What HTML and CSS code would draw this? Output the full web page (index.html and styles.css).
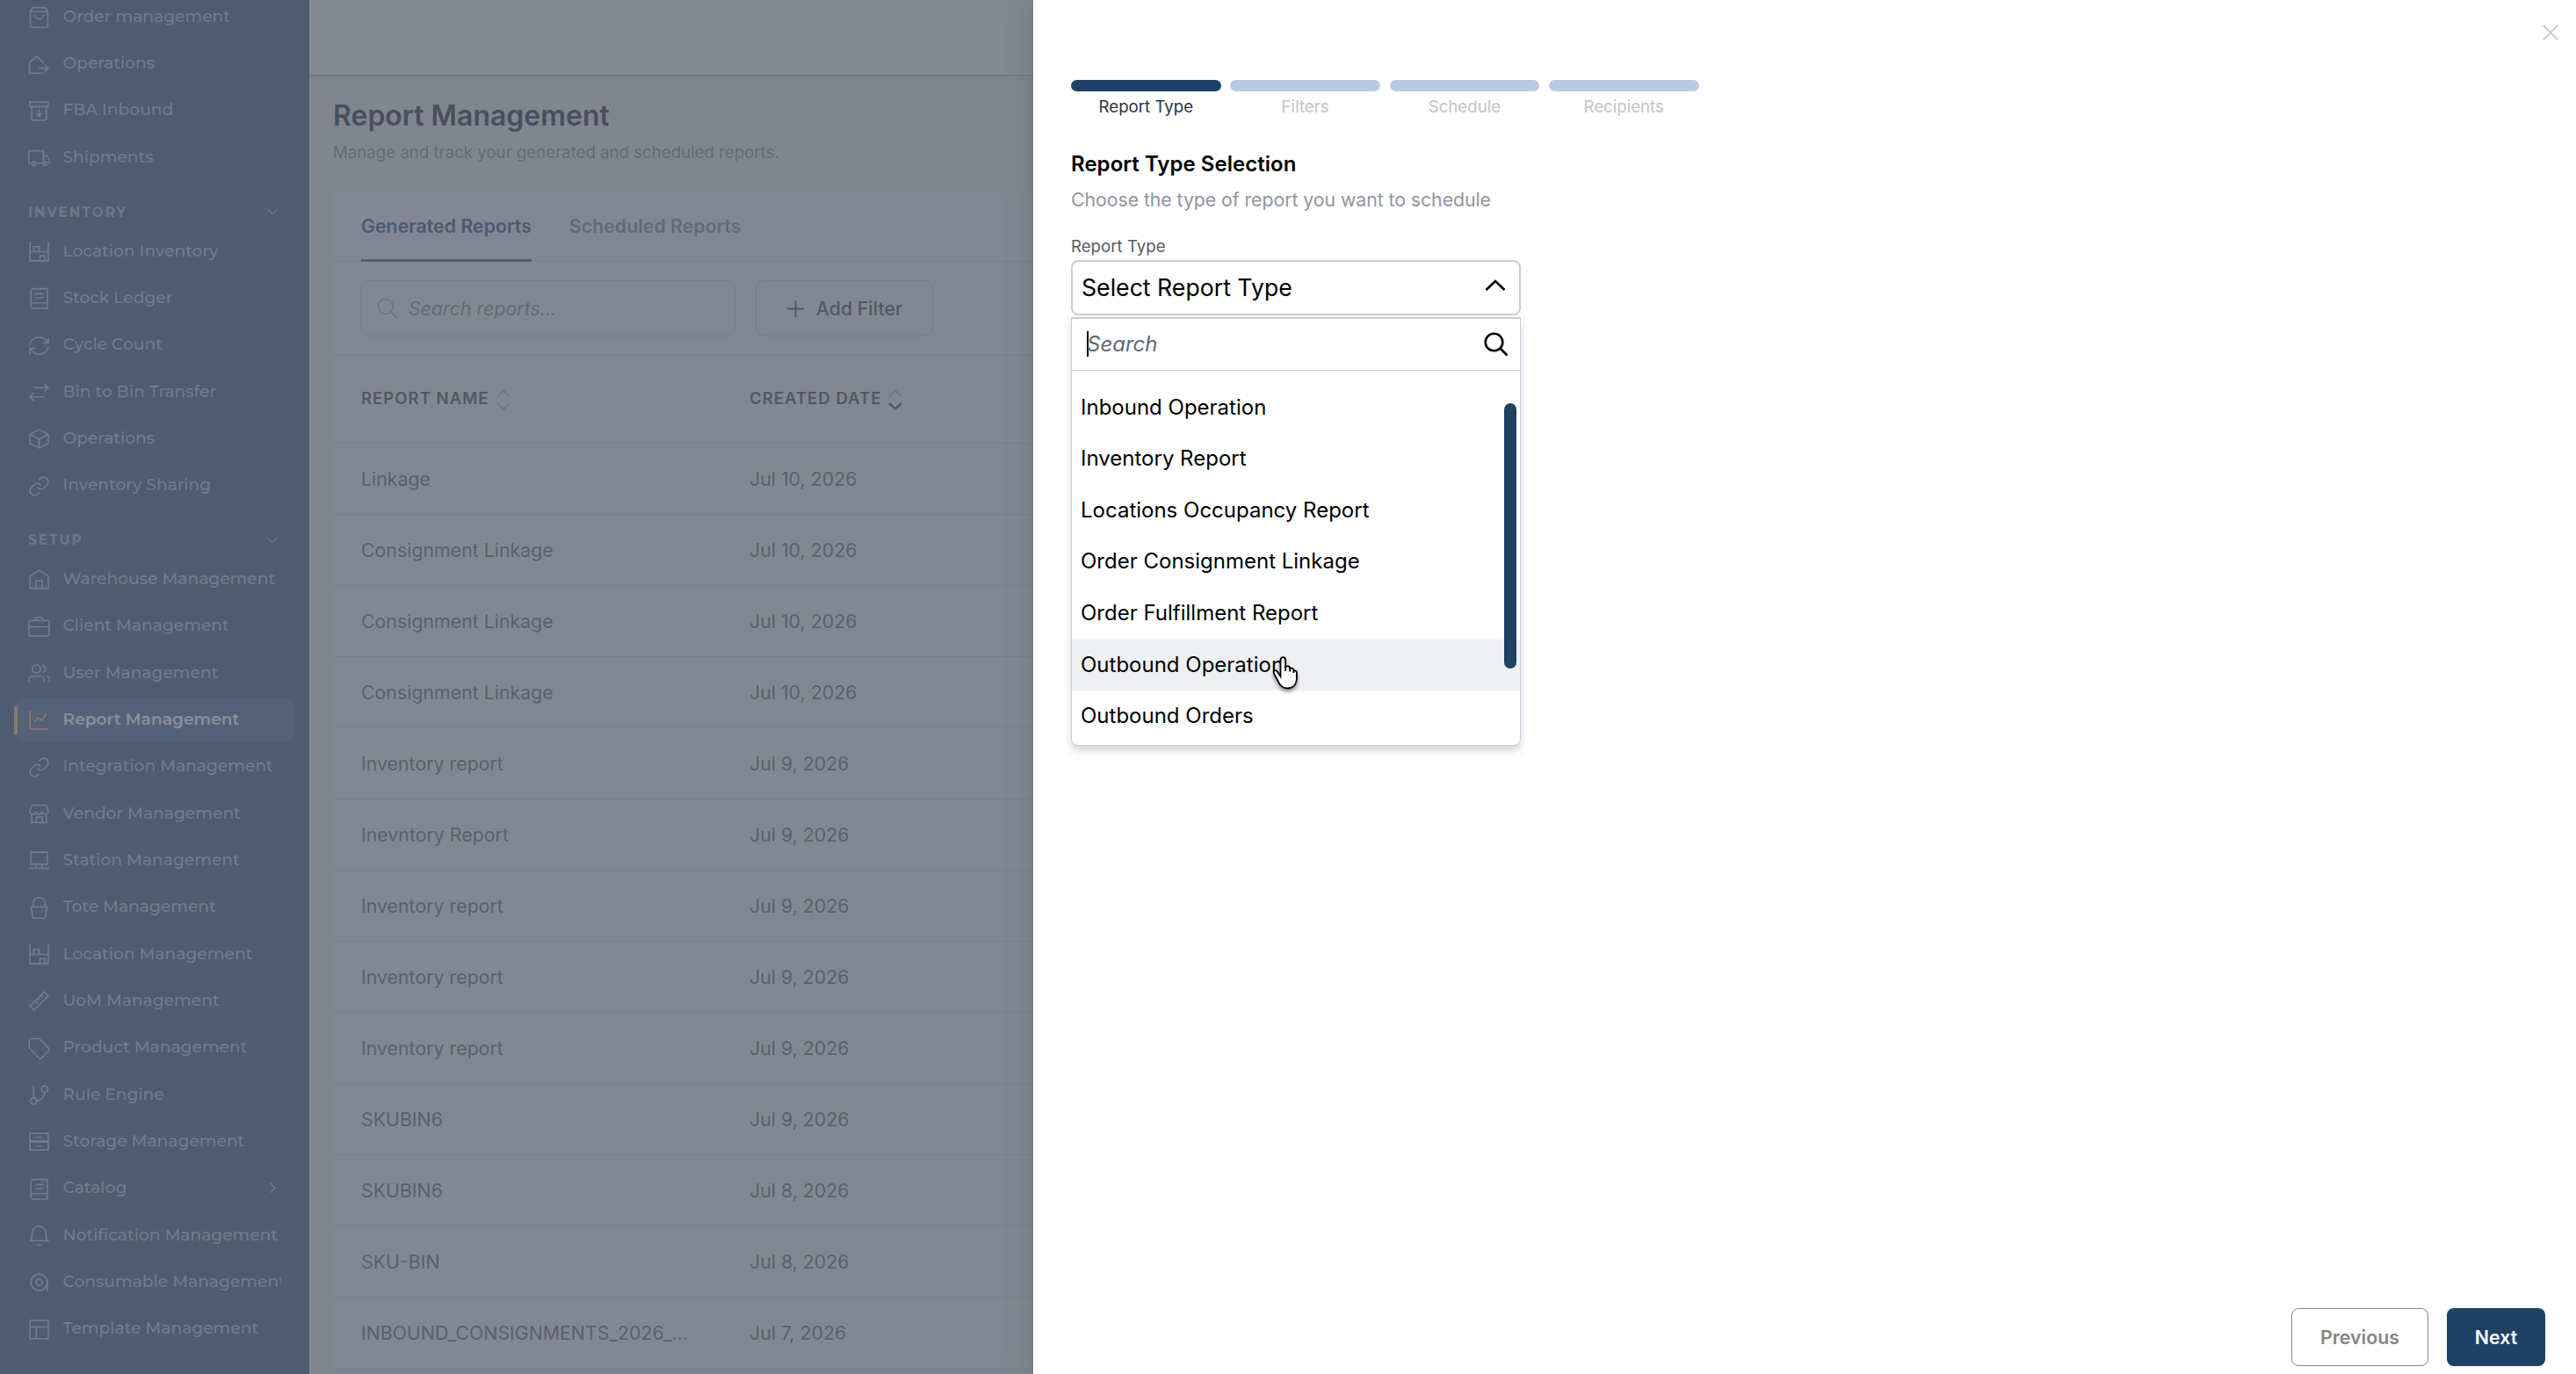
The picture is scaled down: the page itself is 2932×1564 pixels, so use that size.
FILE: index.html
```html
<!DOCTYPE html>
<html lang="en">
<head>
<meta charset="utf-8">
<title>Report Management</title>
<link rel="stylesheet" href="styles.css">
</head>
<body>
<svg class="defs" aria-hidden="true">
  <symbol id="bag" viewBox="0 0 24 24"><path d="M5 1.5h14l2.5 4V21a2 2 0 0 1-2 2h-15a2 2 0 0 1-2-2V5.500zM2.500 6h19M7.500 9.500a4.500 4.500 0 0 0 9 0"/></symbol>
  <symbol id="houseout" viewBox="0 0 24 24"><path d="M17 21.500H1.500V10L9 3l7 6v3M12 16h10M18 12l4 4-4 4"/></symbol>
  <symbol id="archive" viewBox="0 0 24 24"><path d="M2 2h20v5H2zM4 7v13a2 2 0 0 0 2 2h12a2 2 0 0 0 2-2V7M12 10v7M9 14.500l3 3 3-3"/></symbol>
  <symbol id="truck" viewBox="0 0 24 24"><path d="M3 18H.8V4.500h16V18H9M16.800 10h4l2.500 4v4H22M15 18h3"/><circle cx="6" cy="18.500" r="2"/><circle cx="18.800" cy="18.500" r="2"/></symbol>
  <symbol id="rack" viewBox="0 0 24 24"><path d="M2 1v22M22 1v22M2 12h20M2 22h20M6 12V6.500h6V12M13 22v-5.500h5.500V22"/></symbol>
  <symbol id="book" viewBox="0 0 24 24"><path d="M6 1.500h15V23H6a3 3 0 0 1-3-3V4.500a3 3 0 0 1 3-3zM3 19.500a2.500 2.500 0 0 1 2.500-2.500H21M8 7h9M8 11.500h9"/></symbol>
  <symbol id="cycle" viewBox="0 0 24 24"><path d="M2 11a10 10 0 0 1 18-4l2 2M22 3v6h-6M22 13a10 10 0 0 1-18 4l-2-2M2 22v-7h6"/></symbol>
  <symbol id="swap" viewBox="0 0 24 24"><path d="M6 7h16M17.500 2.500 22 7l-4.500 4.500M18 17H2M6.500 12.500 2 17l4.500 4.500"/></symbol>
  <symbol id="box" viewBox="0 0 24 24"><path d="M12 2l10 5v10l-10 5-10-5V7zM2 7l10 5.500L22 7M12 12.500V22"/></symbol>
  <symbol id="link" viewBox="0 0 24 24"><path d="M10 13a5 5 0 0 0 7.540.54l3-3a5 5 0 0 0-7.070-7.070l-1.720 1.710M14 11a5 5 0 0 0-7.540-.54l-3 3a5 5 0 0 0 7.070 7.070l1.710-1.710"/></symbol>
  <symbol id="house" viewBox="0 0 24 24"><path d="M2 22V8.500L12 2l10 6.500V22zM8.500 22v-8.500h7V22"/></symbol>
  <symbol id="case" viewBox="0 0 24 24"><rect x="1" y="5" width="22" height="17" rx="2"/><path d="M8 5V3.500a2 2 0 0 1 2-2h4a2 2 0 0 1 2 2V5M1 12h22"/></symbol>
  <symbol id="users" viewBox="0 0 24 24"><circle cx="9" cy="7" r="4.500"/><path d="M.5 22v-2.500a4.500 4.500 0 0 1 4.500-4.500h8a4.500 4.500 0 0 1 4.500 4.500V22M16 2.800a4.500 4.500 0 0 1 0 8.400M23.500 22v-2a4.500 4.500 0 0 0-3.500-4.800"/></symbol>
  <symbol id="chart" viewBox="0 0 24 24"><path d="M2 2v20h20M7 14l4-4.500 4 3L20 5"/></symbol>
  <symbol id="shop" viewBox="0 0 24 24"><path d="M4 2.500h16l2 6.500a3.300 3.300 0 0 1-6.600 0 3.400 3.400 0 0 1-6.800 0A3.300 3.300 0 0 1 2 9zM4 12v9.500h16V12M9 21.500v-6h6.500v6"/></symbol>
  <symbol id="station" viewBox="0 0 24 24"><path d="M3 3h18v13H3zM1 20.500h22M9 16v4M15 16v4"/></symbol>
  <symbol id="tote" viewBox="0 0 24 24"><path d="M3.500 11h17L19 22a1.500 1.500 0 0 1-1.500 1.200h-11A1.500 1.500 0 0 1 5 22zM5.500 11V7a6.500 6.500 0 0 1 13 0v4"/></symbol>
  <symbol id="ruler" viewBox="0 0 24 24"><path d="M2 17.500 17.500 2 22 6.500 6.500 22zM8 12l2 2M11 9l2 2M14 6l2 2"/></symbol>
  <symbol id="tag" viewBox="0 0 24 24"><path d="M1.200 3v8.500L12 22.400a1.800 1.800 0 0 0 2.500 0l8-8a1.800 1.800 0 0 0 0-2.500L12 1.200H3A1.800 1.800 0 0 0 1.200 3zM7 7h.5"/></symbol>
  <symbol id="branch" viewBox="0 0 24 24"><circle cx="18" cy="5.500" r="3.500"/><circle cx="6" cy="18.500" r="3.500"/><path d="M6 2v13M18 9a9.500 9.500 0 0 1-8.500 9.500"/></symbol>
  <symbol id="drawers" viewBox="0 0 24 24"><path d="M2 3h20v8H2zM2 12.500h20v8.500H2zM9 7.200h6M9 16.800h6"/></symbol>
  <symbol id="bell" viewBox="0 0 24 24"><path d="M2.500 17.500h19C20 16 19.500 14 19.500 9a7.500 7.500 0 0 0-15 0c0 5-.5 7-2 8.500zM9.800 21.500a2.500 2.500 0 0 0 4.400 0"/></symbol>
  <symbol id="tape" viewBox="0 0 24 24"><circle cx="12" cy="12" r="9"/><circle cx="12" cy="12" r="3.300"/><path d="M21 12v10"/></symbol>
  <symbol id="layout" viewBox="0 0 24 24"><path d="M2 2h20v20H2zM2 9h20M9 9v13"/></symbol>
  <symbol id="down" viewBox="0 0 14 14"><path d="M1.500 4 7 9.800 12.500 4"/></symbol>
  <symbol id="right" viewBox="0 0 14 14"><path d="M4.500 1.500 10 7l-5.500 5.500"/></symbol>
  <symbol id="search" viewBox="0 0 28 28"><circle cx="11.500" cy="11.500" r="9.800"/><path d="M18.500 18.500 26.500 26.500"/></symbol>
</svg>

<div class="app">
  <nav class="sidebar">
    <a class="item"><svg class="ico"><use href="#bag"/></svg><span class="label">Order management</span></a>
    <a class="item"><svg class="ico"><use href="#houseout"/></svg><span class="label">Operations</span></a>
    <a class="item"><svg class="ico"><use href="#archive"/></svg><span class="label">FBA Inbound</span></a>
    <a class="item"><svg class="ico"><use href="#truck"/></svg><span class="label">Shipments</span></a>
    <div class="group"><span>INVENTORY</span><svg class="chev"><use href="#down"/></svg></div>
    <a class="item"><svg class="ico"><use href="#rack"/></svg><span class="label">Location Inventory</span></a>
    <a class="item"><svg class="ico"><use href="#book"/></svg><span class="label">Stock Ledger</span></a>
    <a class="item"><svg class="ico"><use href="#cycle"/></svg><span class="label">Cycle Count</span></a>
    <a class="item"><svg class="ico"><use href="#swap"/></svg><span class="label">Bin to Bin Transfer</span></a>
    <a class="item"><svg class="ico"><use href="#box"/></svg><span class="label">Operations</span></a>
    <a class="item"><svg class="ico"><use href="#link"/></svg><span class="label">Inventory Sharing</span></a>
    <div class="group"><span>SETUP</span><svg class="chev"><use href="#down"/></svg></div>
    <a class="item"><svg class="ico"><use href="#house"/></svg><span class="label">Warehouse Management</span></a>
    <a class="item"><svg class="ico"><use href="#case"/></svg><span class="label">Client Management</span></a>
    <a class="item"><svg class="ico"><use href="#users"/></svg><span class="label">User Management</span></a>
    <a class="item active"><svg class="ico"><use href="#chart"/></svg><span class="label">Report Management</span></a>
    <a class="item"><svg class="ico"><use href="#link"/></svg><span class="label">Integration Management</span></a>
    <a class="item"><svg class="ico"><use href="#shop"/></svg><span class="label">Vendor Management</span></a>
    <a class="item"><svg class="ico"><use href="#station"/></svg><span class="label">Station Management</span></a>
    <a class="item"><svg class="ico"><use href="#tote"/></svg><span class="label">Tote Management</span></a>
    <a class="item"><svg class="ico"><use href="#rack"/></svg><span class="label">Location Management</span></a>
    <a class="item"><svg class="ico"><use href="#ruler"/></svg><span class="label">UoM Management</span></a>
    <a class="item"><svg class="ico"><use href="#tag"/></svg><span class="label">Product Management</span></a>
    <a class="item"><svg class="ico"><use href="#branch"/></svg><span class="label">Rule Engine</span></a>
    <a class="item"><svg class="ico"><use href="#drawers"/></svg><span class="label">Storage Management</span></a>
    <a class="item"><svg class="ico"><use href="#book"/></svg><span class="label">Catalog</span><svg class="chev"><use href="#right"/></svg></a>
    <a class="item"><svg class="ico"><use href="#bell"/></svg><span class="label">Notification Management</span></a>
    <a class="item"><svg class="ico"><use href="#tape"/></svg><span class="label">Consumable Management</span></a>
    <a class="item"><svg class="ico"><use href="#layout"/></svg><span class="label">Template Management</span></a>
  </nav>

  <main class="page">
    <header class="topbar"></header>
    <h1 class="title">Report Management</h1>
    <p class="subtitle">Manage and track your generated and scheduled reports.</p>
    <section class="card">
      <div class="tabs"><span class="tab current">Generated Reports</span><span class="tab">Scheduled Reports</span></div>
      <div class="tools">
        <div class="find"><svg class="findico"><use href="#search"/></svg><span>Search reports...</span></div>
        <div class="add"><svg class="plus" viewBox="0 0 22 22"><path d="M11 1v20M1 11h20"/></svg><span>Add Filter</span></div>
      </div>
      <div class="row head">
        <span class="th">REPORT NAME<svg class="sort" viewBox="0 0 16 24"><path d="M1 8.500 8 1.500l7 7M1 16l7 7 7-7"/></svg></span>
        <span class="th">CREATED DATE<svg class="sort" viewBox="0 0 16 24"><path d="M1 8.500 8 1.500l7 7"/><path class="on" d="M1 16l7 6.500 7-6.500"/></svg></span>
      </div>
      <div class="row"><span>Linkage</span><span>Jul 10, 2026</span></div>
      <div class="row"><span>Consignment Linkage</span><span>Jul 10, 2026</span></div>
      <div class="row"><span>Consignment Linkage</span><span>Jul 10, 2026</span></div>
      <div class="row"><span>Consignment Linkage</span><span>Jul 10, 2026</span></div>
      <div class="row"><span>Inventory report</span><span>Jul 9, 2026</span></div>
      <div class="row"><span>Inevntory Report</span><span>Jul 9, 2026</span></div>
      <div class="row"><span>Inventory report</span><span>Jul 9, 2026</span></div>
      <div class="row"><span>Inventory report</span><span>Jul 9, 2026</span></div>
      <div class="row"><span>Inventory report</span><span>Jul 9, 2026</span></div>
      <div class="row"><span>SKUBIN6</span><span>Jul 9, 2026</span></div>
      <div class="row"><span>SKUBIN6</span><span>Jul 8, 2026</span></div>
      <div class="row"><span>SKU-BIN</span><span>Jul 8, 2026</span></div>
      <div class="row"><span>INBOUND_CONSIGNMENTS_2026_...</span><span>Jul 7, 2026</span></div>
    </section>
  </main>

  <aside class="drawer">
    <div class="steps">
      <div class="step now">Report Type</div>
      <div class="step">Filters</div>
      <div class="step">Schedule</div>
      <div class="step">Recipients</div>
    </div>
    <h2 class="heading">Report Type Selection</h2>
    <p class="hint">Choose the type of report you want to schedule</p>
    <div class="fieldname">Report Type</div>
    <div class="select"><span>Select Report Type</span><svg class="up" viewBox="0 0 24 14"><path d="M1.500 12 12 2l10.500 10"/></svg></div>
    <div class="menu">
      <div class="query"><i class="caret"></i><span>Search</span><svg class="glass"><use href="#search"/></svg></div>
      <ul class="options">
        <li>Inbound Operation</li>
        <li>Inventory Report</li>
        <li>Locations Occupancy Report</li>
        <li>Order Consignment Linkage</li>
        <li>Order Fulfillment Report</li>
        <li class="hover">Outbound Operation</li>
        <li>Outbound Orders</li>
      </ul>
      <div class="thumb"></div>
    </div>
    <div class="actions"><button class="btn ghost">Previous</button><button class="btn solid">Next</button></div>
    <svg class="close" viewBox="0 0 18 18"><path d="M.8.8l16.400 16.400M17.200.8.8 17.200"/></svg>
    <svg class="pointer" viewBox="0 0 28 38"><path d="M8.500 22V4a2.800 2.800 0 0 1 5.600 0V17V12.500c1-1.800 5-1.300 5 1V17.500V14.500c1-1.500 4.300-1 4.300 1.200V19v-2.200c1.200-1 3.600-.3 3.600 2v5c0 8-4 12.700-10.500 12.700-6.500 0-9-3.500-11-8.500L.9 19.500c-1-3.500 2.300-4.500 3.800-2.300L8.500 23z"/></svg>
  </aside>
</div>
</body>
</html>
```
FILE: styles.css
```css
* { box-sizing: border-box; }
body { margin: 0; font-family: Inter, "Liberation Sans", sans-serif; background: #828893; }
h1, h2, p, ul { margin: 0; padding: 0; font-weight: inherit; }
svg { fill: none; stroke: currentColor; flex: none; }
.defs { position: absolute; width: 0; height: 0; }
.app { display: flex; width: 2932px; height: 1564px; overflow: hidden; }

.sidebar { flex: none; width: 352px; height: 1564px; padding: 0 16px; background: #4f5b71; color: #737c8b; overflow: hidden; font-family: Montserrat, Inter, sans-serif; }
.sidebar > .item:first-child { margin-top: -6.3px; }
.item { position: relative; display: flex; align-items: center; height: 51px; margin-bottom: 2.33px; padding: 0 16px 1px 16px; border-radius: 11px; font-size: 18.670px; font-weight: 500; white-space: nowrap; }
.ico { width: 25px; height: 25px; margin-right: 14.500px; stroke-width: 1.600; position: relative; top: 1px; }
.label { flex: 1; min-width: 0; overflow: hidden; line-height: 30px; }
.chev { width: 14px; height: 14px; margin-right: 3px; stroke-width: 1.400; }
.group { display: flex; align-items: center; justify-content: space-between; height: 53.500px; padding: 15px 0 0 16px; font-size: 15.500px; font-weight: 700; letter-spacing: 1.900px; color: #6e7788; }
.group .chev { margin-right: 19px; }
.active { background: #556177; color: #8a909b; font-weight: 600; }
.active::before { content: ""; position: absolute; left: 0; top: 10px; width: 4px; height: 32px; border-radius: 0 3px 3px 0; background: #887c6c; }
.active .ico { color: #877b70; }

.page { flex: none; width: 824px; height: 1564px; background: #808690; overflow: hidden; }
.topbar { height: 85px; background: #838893; box-shadow: 0 1px 3px rgba(60, 68, 84, .35); }
.title { margin: 27px 0 0 27px; font-size: 32px; line-height: 40px; font-weight: 600; color: #474f5d; }
.subtitle { margin: 8px 0 0 27px; font-size: 18.670px; line-height: 28px; color: #626977; }
.card { margin: 32px 0 0 27px; background: #828893; }
.tabs { display: flex; gap: 43px; height: 78px; padding: 16px 32px 0; border-bottom: 1px solid #777e8a; font-size: 21.330px; font-weight: 600; color: #626977; }
.tab { height: 61.500px; line-height: 42px; }
.current { color: #4b5a72; border-bottom: 3px solid #4f5e75; }
.tools { display: flex; gap: 23px; height: 107px; padding: 21px 32px; border-bottom: 1px solid #787f8b; font-size: 21.330px; }
.find, .add { display: flex; align-items: center; height: 64px; border: 1px solid #777d89; border-radius: 10px; }
.find { width: 426px; padding-left: 17px; font-style: italic; color: #626875; }
.findico { width: 24px; height: 24px; margin-right: 12px; stroke-width: 2.200; color: #6e7581; }
.add { width: 202px; justify-content: center; gap: 13px; font-weight: 500; color: #505866; }
.plus { width: 21px; height: 21px; stroke-width: 2; }
.row { display: grid; grid-template-columns: 442px 1fr; align-items: center; height: 81px; padding-left: 32px; border-bottom: 1px solid #7a818c; font-size: 21.330px; color: #58606e; }
.head { height: 100px; padding-bottom: 2px; font-size: 18.670px; font-weight: 600; letter-spacing: .93px; color: #505866; }
.th { display: flex; align-items: center; gap: 8px; }
.sort { position: relative; top: 1px; width: 16px; height: 24px; stroke-width: 1.800; color: #6f7682; }
.sort .on { stroke: #4a5a73; stroke-width: 2.600; }

.drawer { position: relative; flex: none; display: flex; flex-direction: column; width: 1756px; height: 1564px; padding: 91px 35px 9px 43px; background: #fff; box-shadow: -8px 0 24px rgba(70, 76, 92, .2); color: #000; }
.steps { display: grid; grid-template-columns: repeat(4, 1fr); gap: 10.670px; width: 714.500px; font-size: 18.670px; line-height: 26px; text-align: center; color: #c2c3c6; }
.step::before { content: ""; display: block; height: 13px; margin-bottom: 4.500px; border-radius: 6.500px; background: #bacae5; }
.now { color: #2c3344; }
.now::before { background: #1e4164; }
.heading { margin-top: 36px; font-size: 24px; line-height: 32px; font-weight: 600; letter-spacing: .04px; }
.hint { margin-top: 11px; font-size: 21.330px; line-height: 26px; letter-spacing: -.08px; color: #92959f; }
.fieldname { margin-top: 28px; font-size: 18.670px; line-height: 26px; color: #555a66; }
.select { display: flex; align-items: center; justify-content: space-between; width: 512px; height: 63px; margin-top: 2px; padding: 0 15px 0 10px; border: 2px solid #cacdd5; border-radius: 8px; font-size: 26.670px; }
.up { width: 24px; height: 14px; stroke-width: 2.600; margin-top: -4px; }
.menu { position: relative; width: 512px; height: 488px; margin-top: 2px; border: 1px solid #c8ccd6; border-radius: 0 0 8px 8px; box-shadow: 0 6px 10px rgba(70, 76, 100, .22); background: #fff; }
.query { display: flex; align-items: center; height: 60px; padding: 0 13px 0 17px; border-top: 1px solid #c8ccd6; border-bottom: 1px solid #c8ccd6; font-size: 24px; font-style: italic; color: #636874; }
.caret { width: 2px; height: 29px; margin-right: -2px; background: #000; }
.glass { width: 28px; height: 28px; margin-left: auto; stroke-width: 2.600; color: #000; }
.options { padding-top: 13px; list-style: none; font-size: 24px; }
.options li { height: 58.670px; padding-left: 10px; line-height: 58.670px; }
.hover { background: #eff0f4; }
.thumb { position: absolute; right: 4px; top: 97px; width: 14px; height: 302px; border-radius: 7px; background: #1e4164; }
.actions { display: flex; justify-content: flex-end; gap: 21px; margin-top: auto; }
.btn { height: 66px; border-radius: 8px; font: 600 21.330px Inter, sans-serif; }
.ghost { width: 156px; border: 1px solid #858585; background: #fff; color: #858585; }
.solid { width: 112px; border: 0; background: #1e4164; color: #fff; }
.close { position: absolute; right: 20px; top: 28px; width: 18px; height: 18px; stroke: #c8c9d2; stroke-width: 2; }
.pointer { position: absolute; left: 273px; top: 747px; width: 28px; height: 38px; fill: #fff; stroke: #000; stroke-width: 1.800; overflow: visible; filter: drop-shadow(0 3px 2px rgba(0, 0, 0, .4)); }
```
